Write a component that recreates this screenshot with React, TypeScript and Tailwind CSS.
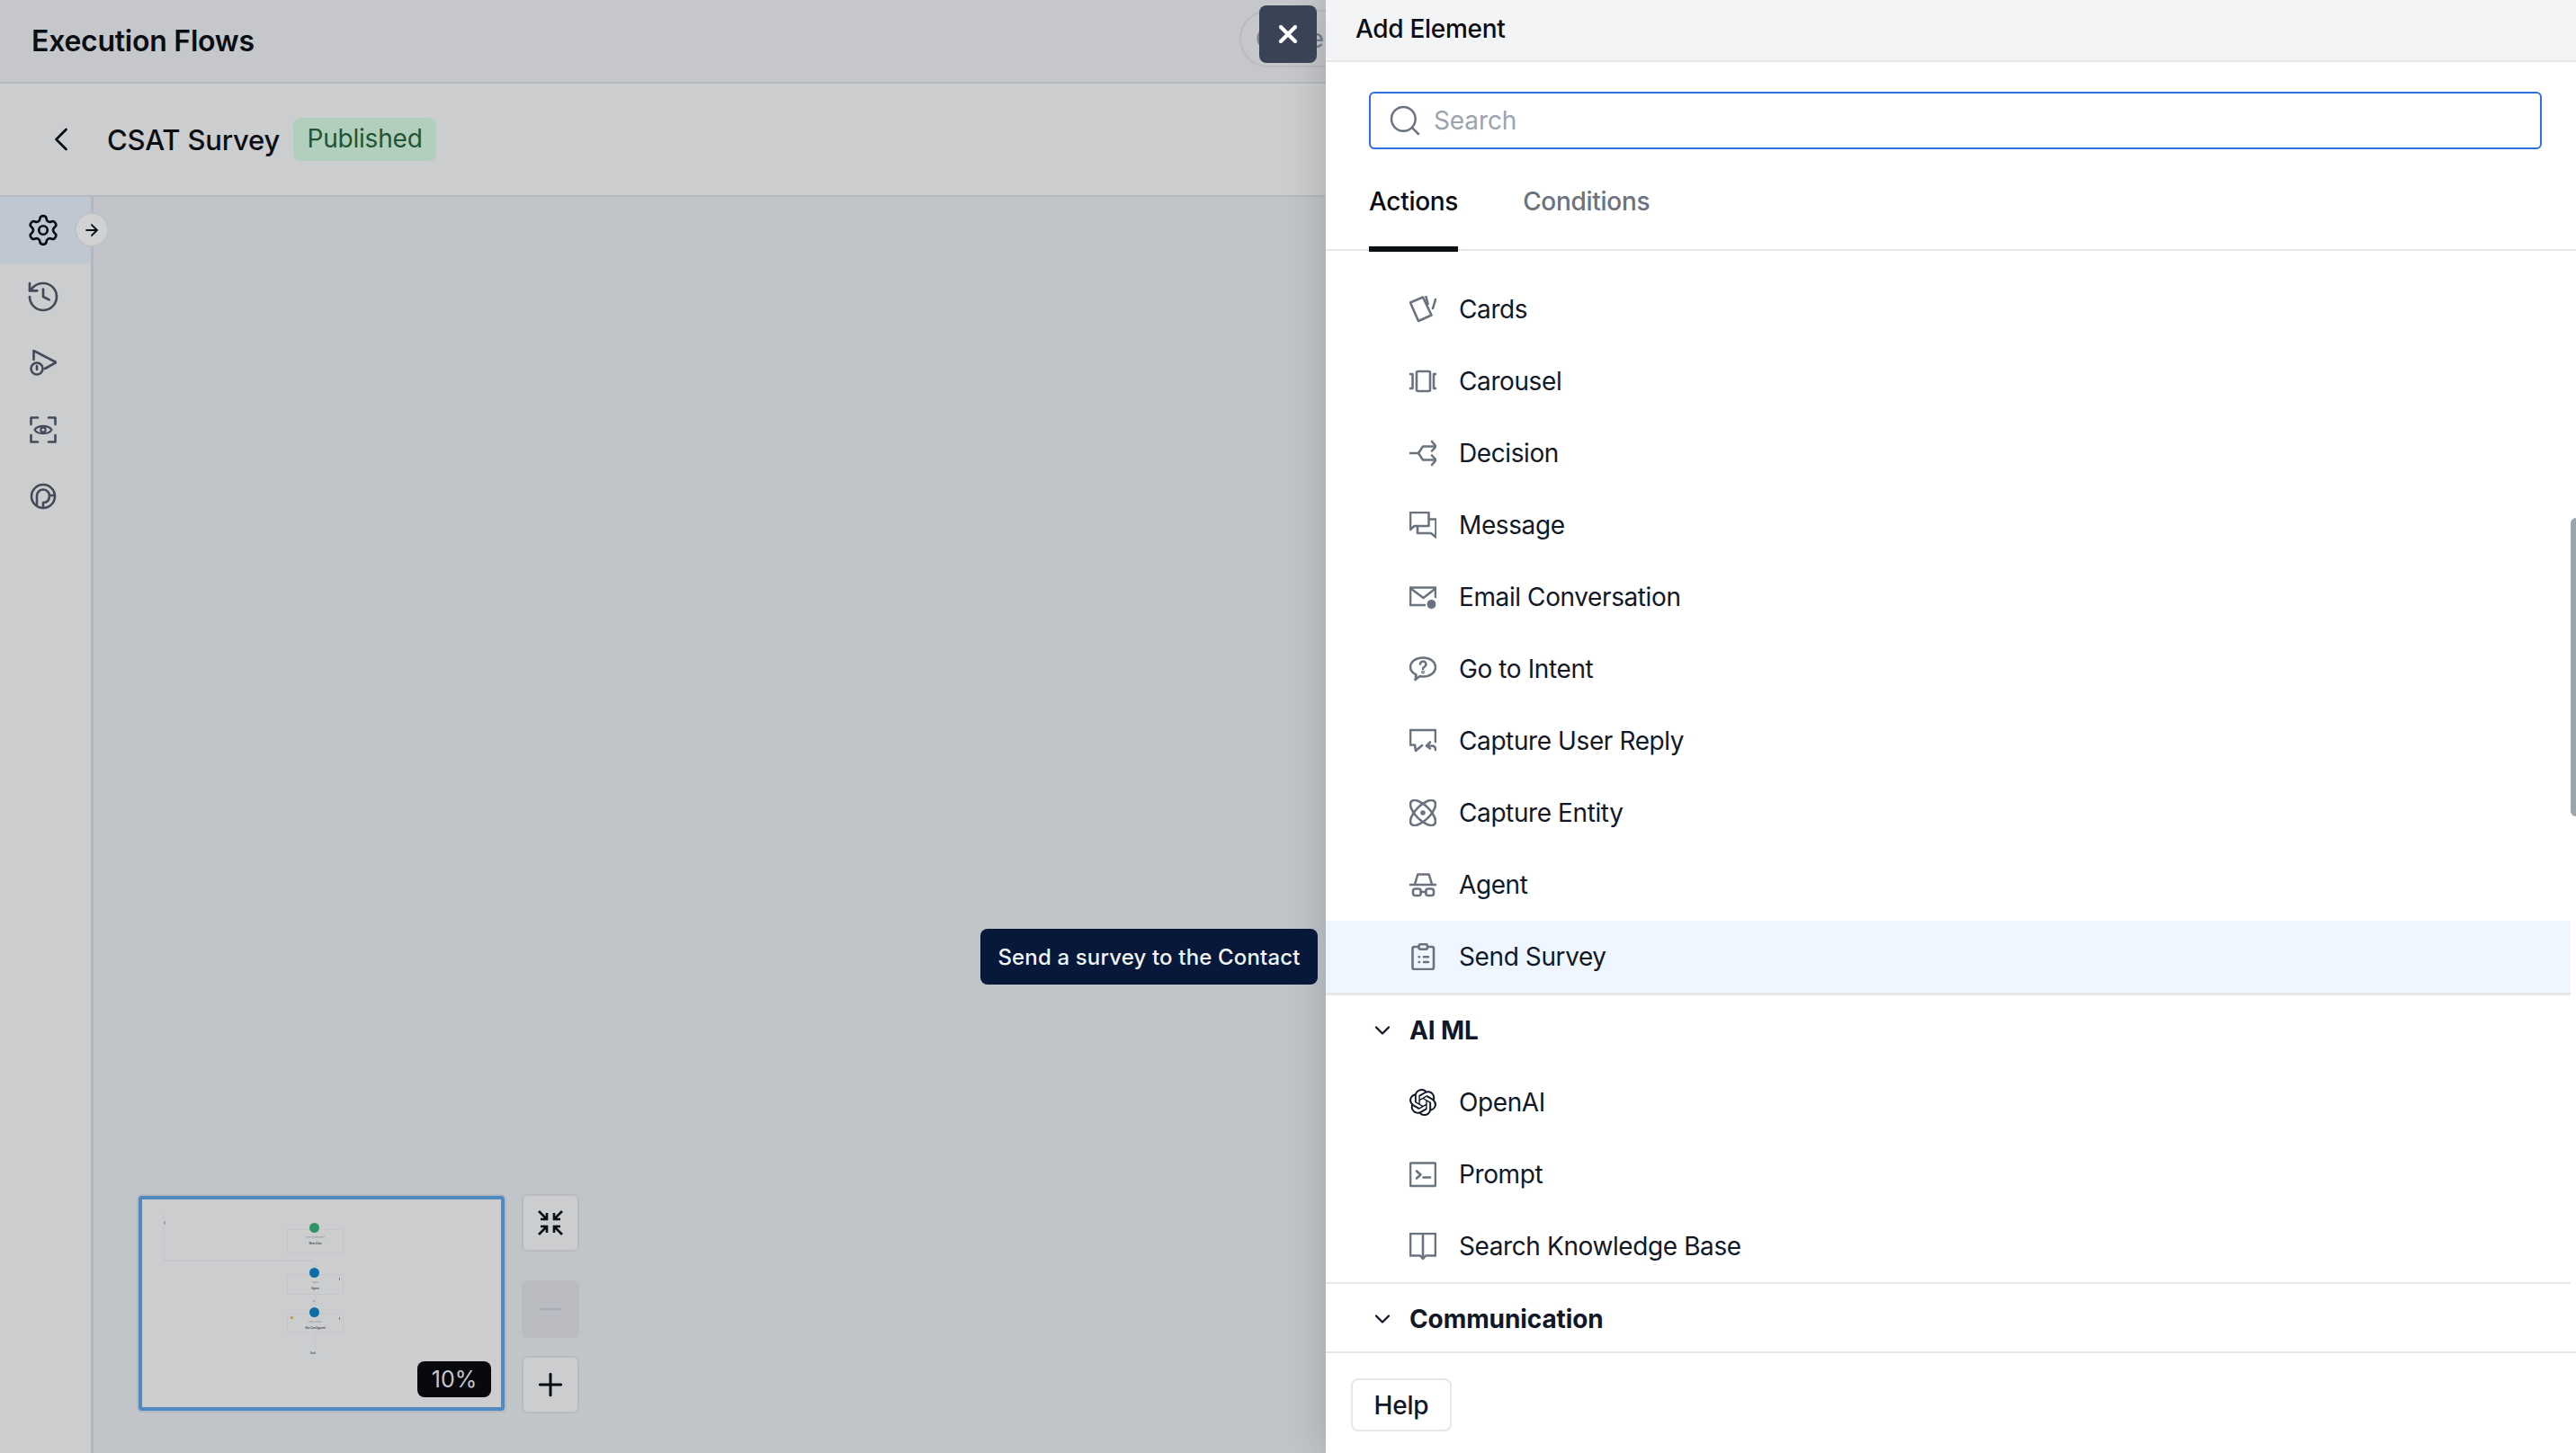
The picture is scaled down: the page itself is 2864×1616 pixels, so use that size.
import React from "react";
import { Settings, History, ArrowRight, ChevronLeft, ChevronDown, Search, X, Plus, Minus } from "lucide-react";
import { SiOpenai } from "react-icons/si";

const S = ({ children }: { children: React.ReactNode }) => (
  <svg viewBox="0 0 30 30" className="w-[30px] h-[30px] shrink-0 text-[#6b7280]" fill="none" stroke="currentColor" strokeWidth="2.6" strokeLinecap="round" strokeLinejoin="round">
    {children}
  </svg>
);

const CardsIcon = () => (
  <S>
    <path d="M1 7.5 15 1.5 24.5 21.5 10 28Z" />
    <path d="M18.5 1 20.5 9" />
    <path d="M29 4 26 14" />
  </S>
);
const CarouselIcon = () => (
  <S>
    <rect x="8" y="4" width="15" height="22" rx="1.5" />
    <path d="M1 7H3.5V23H1" />
    <path d="M29.5 7H27V23H29.5" />
  </S>
);
const DecisionIcon = () => (
  <S>
    <path d="M0.5 15H10L15 7.5H29.5" />
    <path d="M25 2 29.5 7.5 25 12.5" />
    <path d="M10 15 15 22.5H29.5" />
    <path d="M25 17.5 29.5 22.5 25 28" />
  </S>
);
const MessageIcon = () => (
  <S>
    <path d="M1 1H21.5V16H5.5L1 20Z" />
    <path d="M9 16.5V24H24L29.5 28.5V8.5H22" />
  </S>
);
const EmailIcon = () => (
  <S>
    <path d="M29 15V4.5H1V24H17" />
    <path d="M1.5 5.5 15.5 16 29 5.5" />
    <circle cx="24.5" cy="23" r="5.5" fill="currentColor" stroke="white" strokeWidth="1" />
  </S>
);
const IntentIcon = () => (
  <S>
    <path d="M15 2.5C23 2.5 29 7 29 13 29 19 23 23.5 15 23.5 13.5 23.5 12.5 23.3 11.5 23L6.5 27 7.5 21.5C3.5 19.5 1 16.5 1 13 1 7 7 2.5 15 2.5Z" />
    <path d="M12 9.5A3.2 3.2 0 1 1 16.8 12.5C15.6 13.2 15 13.8 15 15" />
    <circle cx="15" cy="18.6" r="0.6" />
  </S>
);
const ReplyIcon = () => (
  <S>
    <path d="M29 16V3H1V19.5H6L7 26 14 20" />
    <path d="M23 16.5 19 20.5 23 23.5" />
    <path d="M19.5 20.5H25C27.5 20.5 29 22 29 25" />
  </S>
);
const EntityIcon = () => (
  <S>
    <ellipse cx="15" cy="15" rx="18" ry="8" transform="rotate(45 15 15)" />
    <ellipse cx="15" cy="15" rx="18" ry="8" transform="rotate(-45 15 15)" />
    <circle cx="15" cy="15" r="2.8" fill="currentColor" stroke="none" />
  </S>
);
const AgentIcon = () => (
  <S>
    <path d="M6 14.5 9.3 3.5H21.7L25 14.5" />
    <path d="M0.8 15H29.2" />
    <rect x="4" y="19.5" width="8.7" height="7.5" rx="2.5" />
    <rect x="18.3" y="19.5" width="8.7" height="7.5" rx="2.5" />
    <path d="M12.7 23H18.3" />
  </S>
);
const SurveyIcon = () => (
  <S>
    <path d="M10.5 4H5.5Q3.5 4 3.5 6V27Q3.5 29 5.5 29H25Q27 29 27 27V6Q27 4 25 4H20" />
    <rect x="10.5" y="1.2" width="9.5" height="5.6" rx="2" />
    <path d="M10.7 15.3H11M10.7 21H11" />
    <path d="M16 15.3H21M16 21H21" />
  </S>
);
const PromptIcon = () => (
  <S>
    <rect x="1" y="2.5" width="28" height="25.5" rx="1" />
    <path d="M8 11.5 12.5 15.5 8 19.5" />
    <path d="M15.5 18.5H23" />
  </S>
);
const BookIcon = () => (
  <S>
    <path d="M1 1H29V25.5H18L15 29 12 25.5H1Z" />
    <path d="M15 1V27" />
  </S>
);
const OpenAiIcon = () => <SiOpenai className="w-[30px] h-[30px] shrink-0 text-[#111827]" />;

const Side = ({ children }: { children: React.ReactNode }) => (
  <svg viewBox="0 0 30 30" className="w-[30px] h-[30px]" fill="none" stroke="currentColor" strokeWidth="2.6" strokeLinecap="round" strokeLinejoin="round">
    {children}
  </svg>
);

const actions = [
  ["Cards", CardsIcon],
  ["Carousel", CarouselIcon],
  ["Decision", DecisionIcon],
  ["Message", MessageIcon],
  ["Email Conversation", EmailIcon],
  ["Go to Intent", IntentIcon],
  ["Capture User Reply", ReplyIcon],
  ["Capture Entity", EntityIcon],
  ["Agent", AgentIcon],
  ["Send Survey", SurveyIcon],
] as const;

const ai = [
  ["OpenAI", OpenAiIcon],
  ["Prompt", PromptIcon],
  ["Search Knowledge Base", BookIcon],
] as const;

function Row({ label, Icon, active }: { label: string; Icon: React.ComponentType; active?: boolean }) {
  return (
    <div className={`h-[80px] flex items-center gap-[25px] pl-[93px] text-[28px] tracking-[-0.4px] text-[#111827] ${active ? "bg-[#eff6ff]" : ""}`}>
      <Icon />
      <span>{label}</span>
    </div>
  );
}

function Section({ label, className }: { label: string; className: string }) {
  return (
    <div className={`flex items-center pl-[49px] pb-[2px] gap-[16px] text-[28px] font-bold tracking-[-0.1px] text-[#111827] ${className}`}>
      <ChevronDown className="w-[28px] h-[28px] text-[#111827]" strokeWidth={2} />
      <span>{label}</span>
    </div>
  );
}

function Node({ left, top, h, label, name, circle, menu, warn }: { left: number; top: number; h: number; label: string; name: string; circle: string; menu?: boolean; warn?: boolean }) {
  return (
    <div className="absolute w-[63px] border border-[#c4c6c9] rounded-[1px] flex flex-col items-center" style={{ left, top, height: h }}>
      <div className="absolute top-[-8px] left-[24px] w-[11px] h-[11px] rounded-full" style={{ background: circle }} />
      <span className="mt-[7px] text-[2.5px] leading-[4px] text-[#8b8e93]">{label}</span>
      <span className="mt-[2px] text-[3px] leading-[4px] font-semibold text-[#3c4047]">{name}</span>
      {menu && <div className="absolute right-[3px] top-[3px] w-[1px] h-[3px] bg-[#7b7e84]" />}
      {warn && <div className="absolute left-[3px] top-[2px] w-[3px] h-[3px] bg-[#c99a2e] rounded-[1px]" />}
    </div>
  );
}

export default function App() {
  return (
    <div className="relative flex h-screen w-full overflow-hidden bg-[#c1c4c9] [font-family:Inter,sans-serif]">
      {/* dimmed page */}
      <div className="w-[1474px] shrink-0 flex flex-col overflow-hidden">
        <header className="h-[93px] shrink-0 flex items-center justify-between pl-[35px] bg-[#c5c7cb] border-b-2 border-[#b8bac2]">
          <h1 className="text-[32px] font-semibold tracking-[-0.25px] text-[#0a0d12]">Execution Flows</h1>
          <div className="h-[64px] mt-[-6px] px-[16px] flex items-center rounded-l-[32px] border-2 border-r-0 border-[#b9bbc0] text-[28px] font-medium text-[#7d828b] w-[96px]">
            Close
          </div>
        </header>
        <div className="h-[126px] shrink-0 flex items-center bg-[#cbcdcf] border-b-2 border-[#b8bac2] pl-[46px]">
          <ChevronLeft className="w-[44px] h-[44px] text-[#0a0d12]" strokeWidth={1.5} />
          <span className="ml-[29px] pt-[2px] text-[31px] tracking-[-0.2px] font-medium text-[#0a0d12]">CSAT Survey</span>
          <span className="ml-[15px] h-[48px] w-[159px] pb-[2px] flex items-center justify-center rounded-[8px] bg-[#b2cebd] text-[28px] tracking-[-0.2px] text-[#1e5631]">Published</span>
        </div>
        <div className="flex-1 flex min-h-0">
          <aside className="relative w-[104px] shrink-0 bg-[#cbcdcf] border-r-[3px] border-[#b5b7be] text-[#424b5a]">
            <div className="h-[74px] flex items-center pl-[29px] bg-[#bfc8d2] text-[#0a0d12]">
              <Settings className="w-[38px] h-[38px]" strokeWidth={1.7} />
            </div>
            <div className="h-[74px] flex items-center pl-[28px]">
              <History className="w-[40px] h-[40px]" strokeWidth={1.6} />
            </div>
            <div className="h-[74px] flex items-center pl-[33px]">
              <Side>
                <path d="M4.5 11V1L29.5 14 17 21" />
                <circle cx="8" cy="21" r="6.5" />
                <path d="M8 18V22" />
              </Side>
            </div>
            <div className="h-[74px] flex items-center pl-[33px]">
              <Side>
                <path d="M9 1.5H1.5V9" />
                <path d="M21 1.5H28.5V9" />
                <path d="M28.5 21V28.5H21" />
                <path d="M9 28.5H1.5V21" />
                <path d="M5.5 15C9 9.5 21 9.5 24.5 15 21 20.5 9 20.5 5.5 15Z" strokeWidth="2.2" />
                <circle cx="15" cy="15" r="2.6" strokeWidth="2.2" />
              </Side>
            </div>
            <div className="h-[74px] flex items-center pl-[33px]">
              <Side>
                <circle cx="15" cy="15" r="13" />
                <path d="M8 24V15A7 7 0 0 1 22 14H28" />
                <path d="M15 28V22C20 22 22 19 22 14" />
              </Side>
            </div>
            <div className="absolute left-[83px] top-[17px] w-[38px] h-[39px] rounded-full bg-[#d0d1d3] border-2 border-[#bfc1c4] flex items-center justify-center">
              <ArrowRight className="w-[20px] h-[20px] text-[#0a0d12]" strokeWidth={2.4} />
            </div>
          </aside>
          <main className="relative flex-1">
            <div className="absolute left-[50px] bottom-[44px] flex items-end gap-[19px]">
              <div className="relative w-[407px] h-[239px] mb-[3px] rounded-[4px] border-4 border-[#4f8ac1] bg-[#cbcdcf] ring-2 ring-[#b4b8bf]">
                <div className="absolute left-[24px] top-[16px] w-[1px] h-[52px] bg-[#c2c4c7]" />
                <div className="absolute left-[24px] top-[68px] w-[168px] h-[1px] bg-[#c2c4c7]" />
                <div className="absolute left-[192px] top-[68px] w-[1px] h-[8px] bg-[#c2c4c7]" />
                <div className="absolute left-[24px] top-[24px] w-[2px] h-[4px] bg-[#a5a7ac]" />
                <div className="absolute left-[192px] top-[105px] w-[1px] h-[22px] bg-[#c2c4c7]" />
                <div className="absolute left-[190px] top-[112px] w-[2px] h-[2px] bg-[#a5a7ac]" />
                <div className="absolute left-[192px] top-[148px] w-[1px] h-[18px] bg-[#c2c4c7]" />
                <Node left={161} top={33} h={27} label="New Conversation" name="New Chat" circle="#2f9468" />
                <Node left={161} top={83} h={23} label="Agent" name="Agent" circle="#0f6ea6" menu />
                <Node left={161} top={127} h={21} label="Send Survey" name="Not Configured" circle="#0f6ea6" menu warn />
                <span className="absolute left-[187px] top-[169px] text-[3px] leading-[4px] font-semibold text-[#3c4047]">End</span>
                <div className="absolute left-[306px] bottom-[11px] w-[82px] h-[40px] pt-[2px] rounded-[8px] bg-[#07090d] text-[#c5c7cb] text-[25px] flex items-center justify-center">
                  10%
                </div>
              </div>
              <div className="flex flex-col">
                <div className="w-[64px] h-[64px] rounded-[6px] border-2 border-[#b8bac0] bg-[#cbcdcf] flex items-center justify-center text-[#0a0d12]">
                  <svg viewBox="0 0 30 30" className="w-[30px] h-[30px]" fill="none" stroke="currentColor" strokeWidth="2.6">
                    <path d="M2 2 11 11M4 11H11V4" />
                    <path d="M28 2 19 11M26 11H19V4" />
                    <path d="M2 28 11 19M4 19H11V26" />
                    <path d="M28 28 19 19M26 19H19V26" />
                  </svg>
                </div>
                <div className="mt-[32px] w-[64px] h-[64px] rounded-[6px] bg-[#babcc2] flex items-center justify-center text-[#a7aab2]">
                  <Minus className="w-[36px] h-[36px]" strokeWidth={1.6} />
                </div>
                <div className="mt-[20px] w-[64px] h-[64px] rounded-[6px] border-2 border-[#b8bac0] bg-[#cbcdcf] flex items-center justify-center text-[#0a0d12]">
                  <Plus className="w-[40px] h-[40px]" strokeWidth={1.8} />
                </div>
              </div>
            </div>
          </main>
        </div>
      </div>

      {/* drawer */}
      <section className="relative z-10 flex-1 min-w-0 flex flex-col bg-white shadow-[-6px_0_40px_rgba(0,0,0,0.14)]">
        <div className="h-[69px] shrink-0 flex items-center pl-[33px] pb-[4px] bg-[#f3f4f6] border-b-2 border-[#e5e7eb] text-[28px] font-medium tracking-[-0.3px] text-[#0a0d12]">
          Add Element
        </div>
        <div className="h-[64px] mt-[33px] ml-[48px] mr-[38px] shrink-0 flex items-center gap-[12px] pl-[18px] rounded-[6px] border-2 border-[#2f6fde]">
          <Search className="w-[40px] h-[40px] text-[#6b7280]" strokeWidth={1.5} />
          <span className="text-[28px] tracking-[-0.1px] text-[#9ca3af]">Search</span>
        </div>
        <div className="h-[113px] shrink-0 flex gap-[72px] pl-[48px] border-b-2 border-[#e5e7eb] text-[28px] font-medium tracking-[-0.3px]">
          <div className="relative h-full flex items-center pt-[5px] text-[#0a0d12]">
            Actions
            <div className="absolute left-0 right-0 bottom-[-3px] h-[6px] bg-[#0a0d12]" />
          </div>
          <div className="h-full flex items-center pt-[5px] text-[#6b7280]">Conditions</div>
        </div>
        <div className="relative flex-1 min-h-0 overflow-hidden pr-[6px] pt-[25px]">
          <div className="border-b-[3px] border-[#e5e7eb]">
            {actions.map(([label, Icon]) => (
              <Row key={label} label={label} Icon={Icon} active={label === "Send Survey"} />
            ))}
          </div>
          <div className="border-b-[2px] border-[#e5e7eb]">
            <Section label="AI ML" className="h-[79px]" />
            {ai.map(([label, Icon]) => (
              <Row key={label} label={label} Icon={Icon} />
            ))}
          </div>
          <Section label="Communication" className="h-[80px]" />
          <div className="absolute right-0 top-[297px] w-[6px] h-[332px] rounded-l-[6px] bg-[#9ca3af]" />
        </div>
        <div className="h-[113px] shrink-0 border-t-2 border-[#e5e7eb] pl-[28px] pt-[28px]">
          <div className="w-[112px] h-[59px] rounded-[8px] border-2 border-[#e5e7eb] flex items-center justify-center text-[28px] font-medium tracking-[-0.2px] text-[#111827]">
            Help
          </div>
        </div>
      </section>

      {/* overlays */}
      <button className="absolute z-20 left-[1400px] top-[6px] w-[64px] h-[64px] rounded-[8px] bg-[#394355] flex items-center justify-center text-white">
        <X className="w-[32px] h-[32px]" strokeWidth={3.2} />
      </button>
      <div className="absolute z-20 left-[1090px] top-[1033px] w-[375px] h-[62px] pt-[1px] rounded-[8px] bg-[#07183a] flex items-center justify-center text-[24px] tracking-[0.15px] font-medium text-[#f3f4f6]">
        Send a survey to the Contact
      </div>
    </div>
  );
}
